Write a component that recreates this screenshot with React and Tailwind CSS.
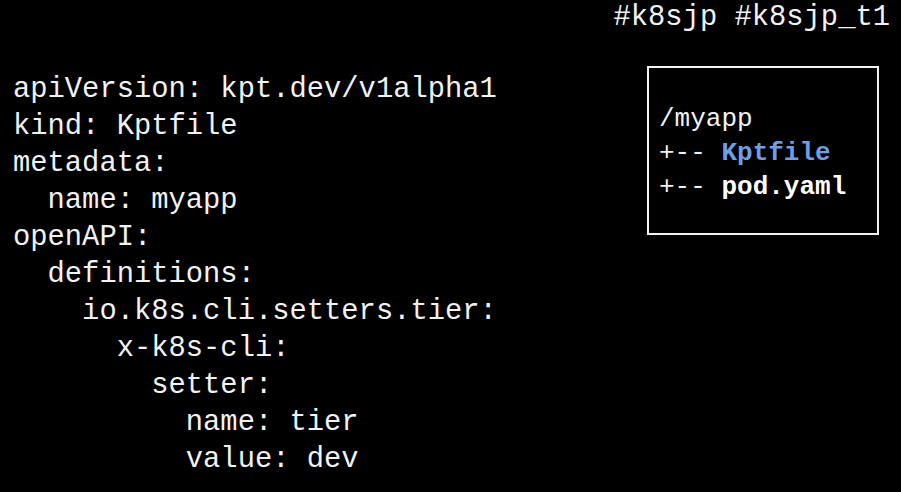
import React from 'react';

const yaml = [
  'apiVersion: kpt.dev/v1alpha1',
  'kind: Kptfile',
  'metadata:',
  '  name: myapp',
  'openAPI:',
  '  definitions:',
  '    io.k8s.cli.setters.tier:',
  '      x-k8s-cli:',
  '        setter:',
  '          name: tier',
  '          value: dev',
];

export default function App() {
  return (
    <div
      className="w-[901px] h-[492px] overflow-hidden bg-black text-[#f2f2f2]"
      style={{ fontFamily: '"Liberation Mono", "DejaVu Sans Mono", monospace' }}
    >
      <div className="flex justify-end pr-[11px] h-[36px] text-[28.8px] leading-[36px]">
        <span>#k8sjp #k8sjp_t1</span>
      </div>
      <div className="flex items-start">
        <pre className="mt-[35px] ml-[13px] w-[634px] text-[28.8px] leading-[37px] font-[inherit]">
          {yaml.join('\n')}
        </pre>
        <div className="mt-[30px] w-[232px] h-[169px] border-2 border-[#f2f2f2] pt-[34px] pl-[10px] text-[26px] leading-[34px]">
          <div>/myapp</div>
          <div className="whitespace-pre">
            +-- <span className="font-bold text-[#6f9ee6]">Kptfile</span>
          </div>
          <div className="whitespace-pre">
            +-- <span className="font-bold text-white">pod.yaml</span>
          </div>
        </div>
      </div>
    </div>
  );
}
